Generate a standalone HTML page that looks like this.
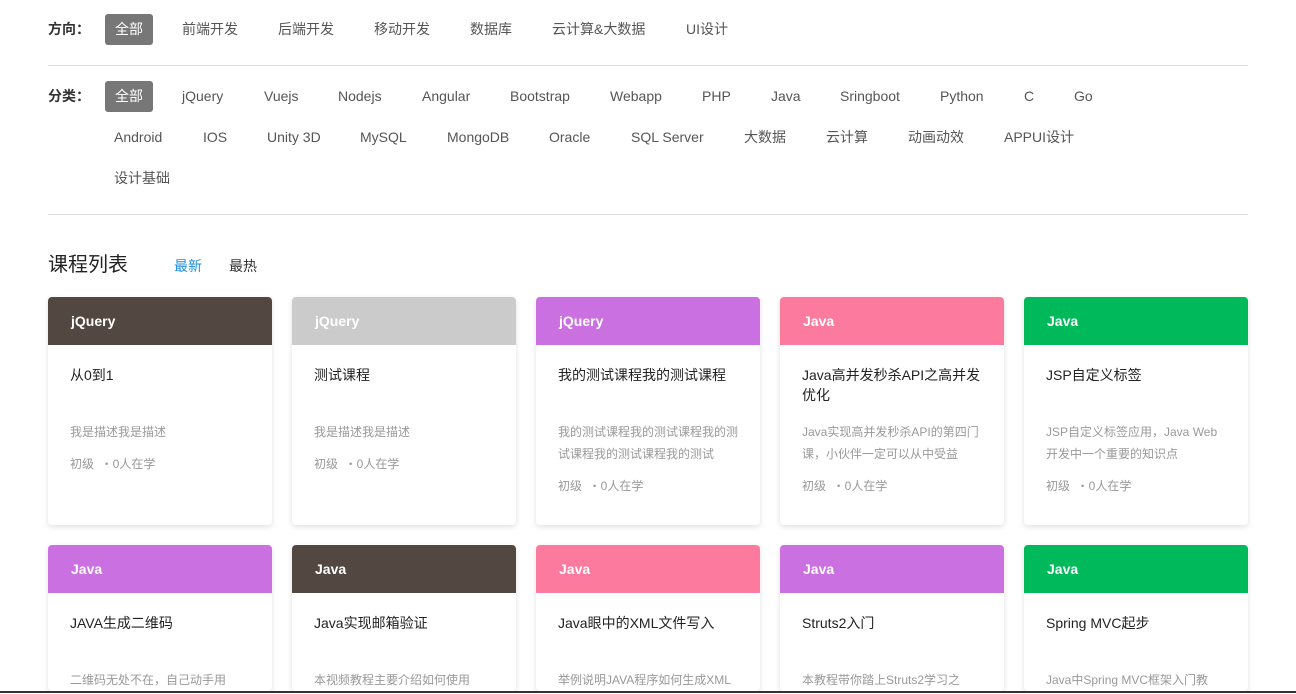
<!DOCTYPE html>
<html style="width:1296px;height:694px;overflow:hidden"><head><meta charset="utf-8"><style>
*{margin:0;padding:0;box-sizing:border-box}
body{width:1296px;height:694px;overflow:hidden;background:#fff;font-family:"Liberation Sans","Noto Sans CJK SC",sans-serif;position:relative;color:#333}
.a{position:absolute;font-size:14px;color:#555;line-height:20px;white-space:nowrap}
.lbl{font-weight:bold;color:#333}
.btn{position:absolute;width:48px;height:31px;background:#777;color:#fff;border-radius:3px;font-size:14px;text-align:center;line-height:31px}
.hr{position:absolute;left:48px;width:1200px;height:1px;background:#ddd}
.card{position:absolute;width:224px;height:228px;background:#fff;border-radius:4px;box-shadow:0 2px 6px rgba(0,0,0,.12);overflow:hidden}
.card.s{height:146px}
.h{height:48px;color:#fff;font-weight:bold;font-size:14px;line-height:48px;padding-left:23px}
.t{font-size:14px;color:#222;padding:20px 22px 0;line-height:20px;height:76px}
.d{font-size:12px;color:#999;padding:0 22px;line-height:22px}
.m{font-size:12px;color:#999;padding:12px 22px 0}
</style></head><body>
<div class="a lbl" style="left:48px;top:19px">方向：</div>
<div class="btn" style="left:105px;top:14px">全部</div>
<div class="a" style="left:182px;top:19px">前端开发</div>
<div class="a" style="left:278px;top:19px">后端开发</div>
<div class="a" style="left:374px;top:19px">移动开发</div>
<div class="a" style="left:470px;top:19px">数据库</div>
<div class="a" style="left:552px;top:19px">云计算&amp;大数据</div>
<div class="a" style="left:686px;top:19px">UI设计</div>
<div class="hr" style="top:65px"></div>
<div class="a lbl" style="left:48px;top:86px">分类：</div>
<div class="btn" style="left:105px;top:81px">全部</div>
<div class="a" style="left:182px;top:86px">jQuery</div>
<div class="a" style="left:264px;top:86px">Vuejs</div>
<div class="a" style="left:338px;top:86px">Nodejs</div>
<div class="a" style="left:422px;top:86px">Angular</div>
<div class="a" style="left:510px;top:86px">Bootstrap</div>
<div class="a" style="left:610px;top:86px">Webapp</div>
<div class="a" style="left:702px;top:86px">PHP</div>
<div class="a" style="left:771px;top:86px">Java</div>
<div class="a" style="left:840px;top:86px">Sringboot</div>
<div class="a" style="left:940px;top:86px">Python</div>
<div class="a" style="left:1024px;top:86px">C</div>
<div class="a" style="left:1074px;top:86px">Go</div>
<div class="a" style="left:114px;top:127px">Android</div>
<div class="a" style="left:203px;top:127px">IOS</div>
<div class="a" style="left:267px;top:127px">Unity 3D</div>
<div class="a" style="left:360px;top:127px">MySQL</div>
<div class="a" style="left:447px;top:127px">MongoDB</div>
<div class="a" style="left:549px;top:127px">Oracle</div>
<div class="a" style="left:631px;top:127px">SQL Server</div>
<div class="a" style="left:744px;top:127px">大数据</div>
<div class="a" style="left:826px;top:127px">云计算</div>
<div class="a" style="left:908px;top:127px">动画动效</div>
<div class="a" style="left:1004px;top:127px">APPUI设计</div>
<div class="a" style="left:114px;top:168px">设计基础</div>
<div class="hr" style="top:214px"></div>
<div class="a" style="left:48px;top:252px;font-size:20px;color:#222;line-height:26px">课程列表</div>
<div class="a" style="left:174px;top:256px;color:#1e90e0">最新</div>
<div class="a" style="left:229px;top:256px;color:#333">最热</div>

<div class="card" style="left:48px;top:297px"><div class="h" style="background:#534741">jQuery</div><div class="t">从0到1</div><div class="d">我是描述我是描述</div><div class="m">初级 &nbsp;・0人在学</div></div>
<div class="card" style="left:292px;top:297px"><div class="h" style="background:#cbcbcb">jQuery</div><div class="t">测试课程</div><div class="d">我是描述我是描述</div><div class="m">初级 &nbsp;・0人在学</div></div>
<div class="card" style="left:536px;top:297px"><div class="h" style="background:#cb70e0">jQuery</div><div class="t">我的测试课程我的测试课程</div><div class="d">我的测试课程我的测试课程我的测试课程我的测试课程我的测试</div><div class="m">初级 &nbsp;・0人在学</div></div>
<div class="card" style="left:780px;top:297px"><div class="h" style="background:#fc7a9e">Java</div><div class="t">Java高并发秒杀API之高并发优化</div><div class="d">Java实现高并发秒杀API的第四门课，小伙伴一定可以从中受益</div><div class="m">初级 &nbsp;・0人在学</div></div>
<div class="card" style="left:1024px;top:297px"><div class="h" style="background:#00b95a">Java</div><div class="t">JSP自定义标签</div><div class="d">JSP自定义标签应用，Java Web开发中一个重要的知识点</div><div class="m">初级 &nbsp;・0人在学</div></div>

<div class="card s" style="left:48px;top:545px"><div class="h" style="background:#cb70e0">Java</div><div class="t">JAVA生成二维码</div><div class="d">二维码无处不在，自己动手用</div></div>
<div class="card s" style="left:292px;top:545px"><div class="h" style="background:#534741">Java</div><div class="t">Java实现邮箱验证</div><div class="d">本视频教程主要介绍如何使用</div></div>
<div class="card s" style="left:536px;top:545px"><div class="h" style="background:#fc7a9e">Java</div><div class="t">Java眼中的XML文件写入</div><div class="d">举例说明JAVA程序如何生成XML</div></div>
<div class="card s" style="left:780px;top:545px"><div class="h" style="background:#cb70e0">Java</div><div class="t">Struts2入门</div><div class="d">本教程带你踏上Struts2学习之</div></div>
<div class="card s" style="left:1024px;top:545px"><div class="h" style="background:#00b95a">Java</div><div class="t">Spring MVC起步</div><div class="d">Java中Spring MVC框架入门教</div></div>
<div style="position:absolute;left:0;top:691px;width:1296px;height:3px;background:#fff;border-top:2px solid #333"></div>
</body></html>
